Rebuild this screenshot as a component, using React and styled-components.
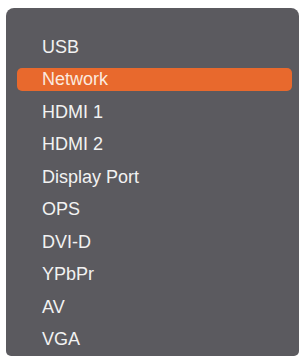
import React, { useState } from "react"
import styled, { createGlobalStyle } from "styled-components"

const Global = createGlobalStyle`
  html, body {
    margin: 0;
    padding: 0;
    background: #ffffff;
  }
  body {
    font-family: "Liberation Sans", Arial, sans-serif;
  }
`

const Page = styled.div`
  width: 303px;
  height: 359px;
  padding: 8px 4px 0 6px;
  box-sizing: border-box;
`

const Panel = styled.ul`
  list-style: none;
  margin: 0;
  height: 348px;
  box-sizing: border-box;
  padding: 23px 7px 0 11px;
  background: #5b5a5f;
  border-radius: 8px 8px 5px 5px;
  display: flex;
  flex-direction: column;
  overflow: hidden;
`

const Item = styled.li`
  flex: 0 0 32.5px;
  display: flex;
  align-items: center;
`

const Label = styled.span`
  flex: 1;
  height: 23px;
  display: flex;
  align-items: center;
  padding-left: 25px;
  border-radius: 5px;
  font-size: 18px;
  color: ${p => (p.active ? "#fbe9df" : "#f2f2f2")};
  background: ${p => (p.active ? "#e8692d" : "transparent")};
`

const sources = [
  "USB",
  "Network",
  "HDMI 1",
  "HDMI 2",
  "Display Port",
  "OPS",
  "DVI-D",
  "YPbPr",
  "AV",
  "VGA"
]

const App = () => {
  const [selected, setSelected] = useState("Network")
  return (
    <>
      <Global />
      <Page>
        <Panel>
          {sources.map(name => (
            <Item key={name} onClick={() => setSelected(name)}>
              <Label active={selected === name}>{name}</Label>
            </Item>
          ))}
        </Panel>
      </Page>
    </>
  )
}

export default App
